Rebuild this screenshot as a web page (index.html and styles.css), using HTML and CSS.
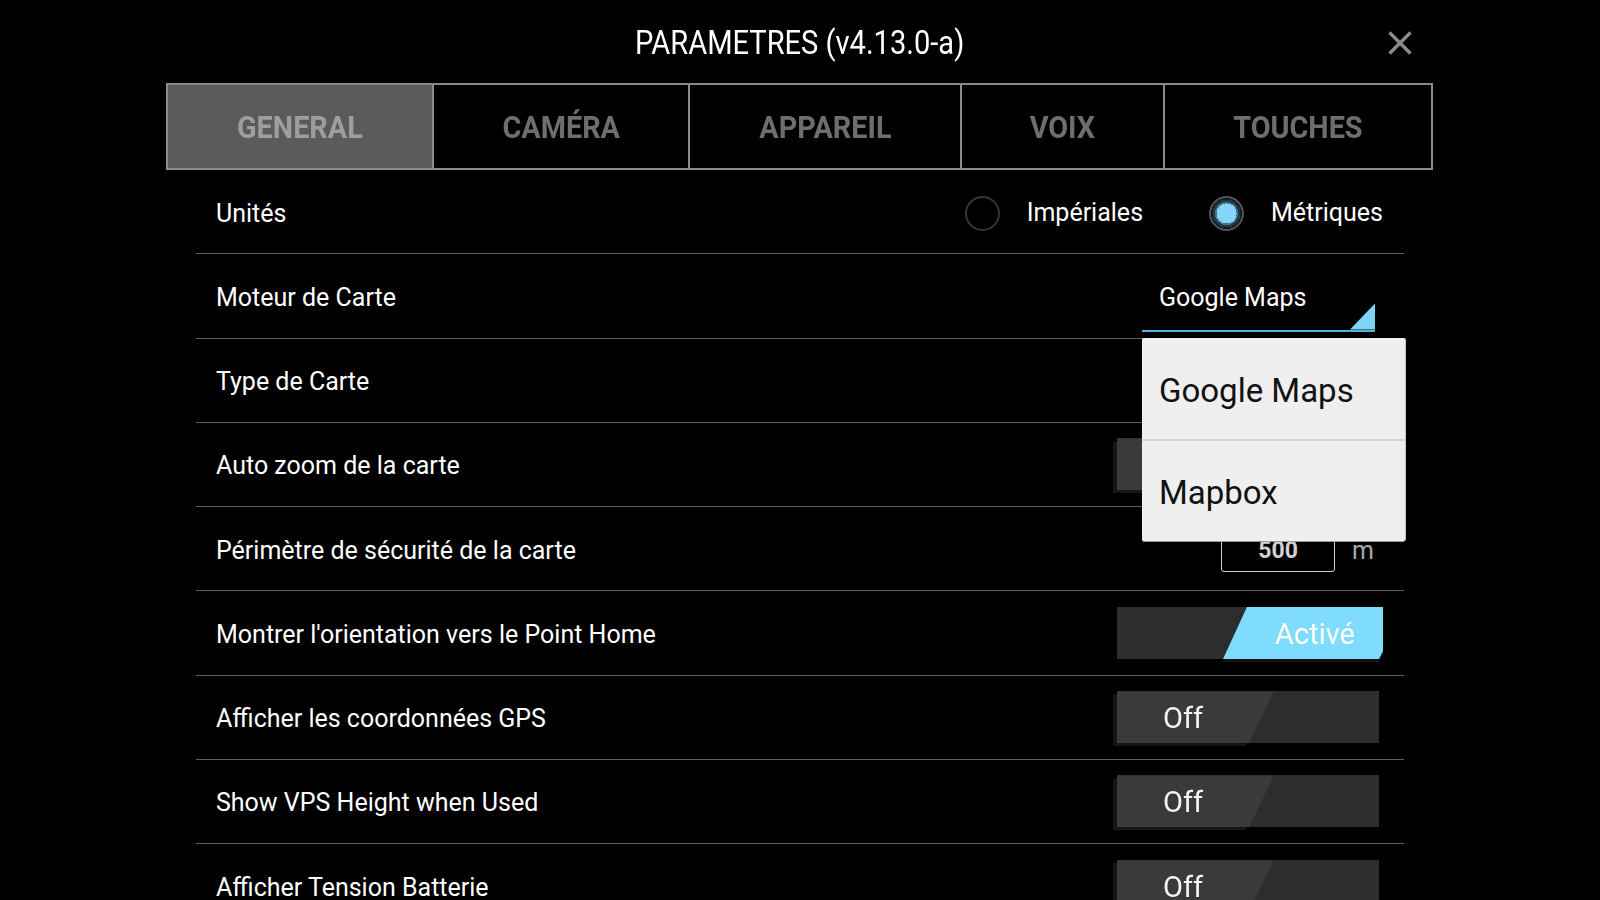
FILE: index.html
```html
<!DOCTYPE html>
<html lang="fr">
<head>
<meta charset="utf-8">
<title>Paramètres</title>
<link rel="stylesheet" href="styles.css">
</head>
<body>
<div class="screen">
  <header class="topbar">
    <div class="spacer"></div>
    <h1 class="title"><span>PARAMETRES (v4.13.0-a)</span></h1>
    <button class="close" aria-label="Fermer">
      <svg viewBox="0 0 24 24" width="24" height="24"><path d="M1.5 1.5 L22.5 22.5 M22.5 1.5 L1.5 22.5" stroke="#8d8d8d" stroke-width="3.2" fill="none"/></svg>
    </button>
  </header>

  <nav class="tabs">
    <div class="tab active"><span>GENERAL</span></div>
    <div class="tab"><span>CAMÉRA</span></div>
    <div class="tab"><span>APPAREIL</span></div>
    <div class="tab"><span>VOIX</span></div>
    <div class="tab"><span>TOUCHES</span></div>
  </nav>

  <div class="list">
    <div class="row">
      <span class="label">Unités</span>
      <div class="radios">
        <span class="radio"></span><span class="rlabel">Impériales</span>
        <span class="radio on second"></span><span class="rlabel">Métriques</span>
      </div>
    </div>

    <div class="row">
      <span class="label">Moteur de Carte</span>
      <div class="spinner"><span>Google Maps</span></div>
    </div>

    <div class="row">
      <span class="label">Type de Carte</span>
    </div>

    <div class="row">
      <span class="label">Auto zoom de la carte</span>
      <div class="toggle"><div class="thumb-wrap"><span class="thumb"></span></div></div>
    </div>

    <div class="row">
      <span class="label">Périmètre de sécurité de la carte</span>
      <div class="field">500</div>
      <span class="unit">m</span>
    </div>

    <div class="row">
      <span class="label">Montrer l'orientation vers le Point Home</span>
      <div class="toggle on"><div class="thumb-wrap"><span class="thumb">Activé</span></div></div>
    </div>

    <div class="row">
      <span class="label">Afficher les coordonnées GPS</span>
      <div class="toggle"><div class="thumb-wrap"><span class="thumb">Off</span></div></div>
    </div>

    <div class="row">
      <span class="label">Show VPS Height when Used</span>
      <div class="toggle"><div class="thumb-wrap"><span class="thumb">Off</span></div></div>
    </div>

    <div class="row">
      <span class="label">Afficher Tension Batterie</span>
      <div class="toggle"><div class="thumb-wrap"><span class="thumb">Off</span></div></div>
    </div>

    <div class="popup">
      <div class="item">Google Maps</div>
      <div class="item">Mapbox</div>
    </div>
  </div>
</div>
</body>
</html>
```

FILE: styles.css
```css
html, body {
  margin: 0;
  padding: 0;
  background: #000;
}

body {
  width: 1600px;
  height: 900px;
  overflow: hidden;
  font-family: Roboto, "Liberation Sans", sans-serif;
  color: #fff;
}

/* ---------- header ---------- */
.topbar {
  display: grid;
  grid-template-columns: 1fr auto 1fr;
  align-items: center;
  height: 83px;
  padding-top: 1px;
  box-sizing: border-box;
}

.title {
  margin: 0;
  font-size: 34px;
  font-weight: 400;
  line-height: 40px;
  color: #fff;
  text-align: center;
}

.title span {
  display: inline-block;
  transform: scaleX(0.855);
}

.close {
  justify-self: end;
  margin-right: 188px;
  margin-top: 2px;
  width: 24px;
  height: 24px;
  padding: 0;
  border: 0;
  background: none;
  display: flex;
}

/* ---------- tabs ---------- */
.tabs {
  margin-left: 166px;
  width: 1267px;
  height: 87px;
  box-sizing: border-box;
  border: 2px solid #8a8a8a;
  display: grid;
  grid-template-columns: 264px 256px 272px 203px 268px;
}

.tab {
  display: flex;
  align-items: center;
  justify-content: center;
  border-left: 2px solid #8a8a8a;
  font-size: 32px;
  font-weight: 700;
  color: #6e6e6e;
  box-sizing: border-box;
}

.tab:first-child {
  border-left: 0;
}

.tab.active {
  background: #5b5b5b;
  color: #9e9e9e;
}

.tab span {
  display: inline-block;
  transform: scaleX(0.9);
}

/* ---------- list ---------- */
.list {
  position: relative;
  margin-left: 196px;
  width: 1208px;
}

.row {
  display: flex;
  align-items: center;
  height: 84.25px;
  box-sizing: border-box;
  border-bottom: 1px solid #5f5f5f;
  padding-left: 20px;
}

.label {
  flex: 1;
  padding-top: 4px;
  font-size: 25px;
  line-height: 30px;
  color: #fff;
}

/* radios */
.radios {
  display: flex;
  align-items: center;
  margin-right: 21px;
  padding-top: 3px;
}

.radio {
  width: 35px;
  height: 35px;
  box-sizing: border-box;
  border-radius: 50%;
  border: 2px solid #363636;
}

.radio.second {
  margin-left: 66px;
}

.radio.on {
  border: 0;
  background: radial-gradient(circle at center,
    #84d7fa 0 10px,
    #3d7a90 10px 11.5px,
    #243740 11.5px 14px,
    #141b1f 14px 15.5px,
    #4a5358 15.5px 17.5px,
    transparent 17.5px);
}

.rlabel {
  margin-left: 27px;
  font-size: 25px;
  line-height: 30px;
  color: #fff;
}

/* spinner */
.spinner {
  position: relative;
  align-self: flex-end;
  margin-bottom: 6px;
  margin-right: 29px;
  width: 233px;
  height: 48px;
  box-sizing: border-box;
  border-bottom: 2px solid #4fb4dc;
  padding-left: 17px;
  font-size: 25px;
  line-height: 27px;
  color: #fff;
}

.spinner::after {
  content: "";
  position: absolute;
  right: 0;
  bottom: 0;
  width: 25px;
  height: 26px;
  background: #7fd4f3;
  clip-path: polygon(100% 0, 100% 100%, 0 100%);
}

/* popup */
.popup {
  position: absolute;
  left: 946px;
  top: 168px;
  width: 263px;
  height: 203px;
  background: #efefef;
  border-radius: 2px;
  box-shadow: 0 1px 0 #9a9a9a, 1px 0 0 #c4c4c4;
}

.item {
  height: 101px;
  box-sizing: border-box;
  padding-top: 4px;
  display: flex;
  align-items: center;
  padding-left: 17px;
  font-size: 33px;
  color: #121212;
}

.item + .item {
  border-top: 2px solid #d5d5d5;
}

/* field */
.field {
  width: 114px;
  height: 46px;
  box-sizing: border-box;
  padding-top: 3px;
  border: 1.5px solid #cfcfcf;
  border-radius: 3px;
  display: flex;
  align-items: center;
  justify-content: center;
  font-size: 23px;
  font-weight: 700;
  color: #d2d2d2;
}

.unit {
  margin-left: 17px;
  margin-right: 30px;
  padding-top: 4px;
  font-size: 25px;
  color: #a9a9a9;
}

/* toggles */
.toggle {
  display: flex;
  width: 262px;
  height: 52px;
  margin-right: 25px;
  background: #2d2d2d;
}

.thumb-wrap {
  display: flex;
  filter: drop-shadow(-4px 3px 0 #161616);
}

.thumb {
  display: flex;
  align-items: center;
  width: 157px;
  height: 52px;
  box-sizing: border-box;
  padding-left: 46px;
  padding-top: 2px;
  background: #3a3a3a;
  clip-path: polygon(0 0, 100% 0, calc(100% - 25px) 100%, 0 100%);
  font-size: 29px;
  color: #f4f4f4;
}

.toggle.on .thumb-wrap {
  margin-left: auto;
  margin-right: -4px;
  filter: drop-shadow(0 3px 0 #141414);
}

.toggle.on .thumb {
  width: 160px;
  padding-left: 24px;
  justify-content: center;
  background: #80dcfc;
  color: #fff;
  clip-path: polygon(24px 0, 100% 0, 100% calc(100% - 8px), calc(100% - 4px) 100%, 0 100%);
}
```
